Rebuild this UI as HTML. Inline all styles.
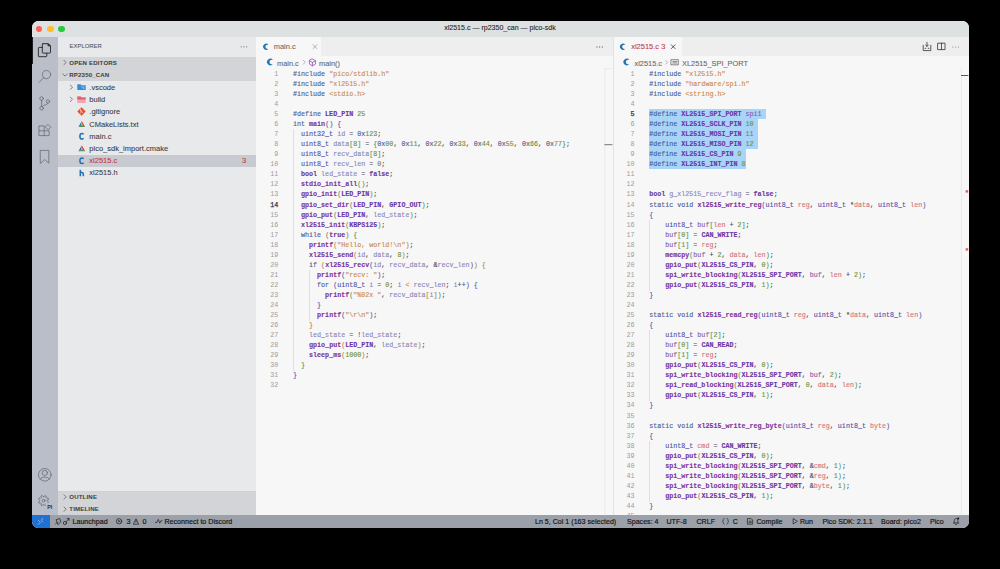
<!DOCTYPE html>
<html><head><meta charset="utf-8">
<style>
*{margin:0;padding:0;box-sizing:border-box}
html,body{width:1000px;height:569px;background:#000;overflow:hidden}
body{font-family:"Liberation Sans",sans-serif;position:relative}
#win{position:absolute;left:31.5px;top:21px;width:937px;height:506.5px;border-radius:6.5px;overflow:hidden;background:#f7f7f7}
.abs{position:absolute}
#title{left:0;top:0;width:937px;height:16px;background:#dde1e1}
#title .t{position:absolute;left:0;width:100%;top:3.1px;text-align:center;font-size:7.05px;color:#262626;-webkit-text-stroke:0.1px currentColor}
.dot{position:absolute;top:4.6px;width:6.6px;height:6.6px;border-radius:50%}
#act{left:0;top:16px;width:26.5px;height:478px;background:#babec8}
#side{left:26.5px;top:16px;width:198px;height:478px;background:#e8e9eb}
#ed1{left:224.5px;top:16px;width:356.5px;height:478.5px;background:#f7f7f7}
#ed2{left:581px;top:16px;width:356px;height:478.5px;background:#f7f7f7;border-left:0.6px solid #e2e2e2}
#status{left:0;top:494px;width:937px;height:12.5px;background:#9ba0a9}
.tabbar{position:absolute;left:0;top:0;width:100%;height:19px;background:#eeeeee}
.tab{position:absolute;top:0;height:19px;background:#f7f7f7}
.ui{font-size:7.5px;color:#3c3c3c;white-space:pre;position:absolute;-webkit-text-stroke:0.08px currentColor}
.sh{font-size:6.1px;font-weight:bold;color:#3c3c3c;position:absolute;letter-spacing:0.15px}
.row{position:absolute;left:0;width:198px;height:12.2px}
.code{font-family:"Liberation Mono",monospace}
.ln{position:absolute;height:10px;line-height:10px;text-align:right;font-family:"Liberation Mono",monospace;font-size:6.7px;color:#9c9c9c}
.ln.cur{color:#2e3550;-webkit-text-stroke:0.25px currentColor}
.cl{position:absolute;height:10px;line-height:10px;white-space:pre;font-family:"Liberation Mono",monospace;font-size:6.7px;color:#444;-webkit-text-stroke:0.12px currentColor}
.cl i{font-style:normal}
.sel{position:absolute;height:10.04px;background:#a7d4f7}
.ig{position:absolute;width:0.7px;height:10.6px;background:#e0e0e0}
.k{color:#4b5a92}
.kb{color:#6b3a9a;font-weight:bold}
.t{color:#5250ac}
.s{color:#cd8a45}
.n{color:#6f8f3e}
.f{color:#7a35a0;font-weight:bold}
.m{color:#6c36a6;font-weight:bold}
.p{color:#d4737a}
.v{color:#8a86b8}
.v2{color:#8a5aa8}
.o{color:#484d5e}
.b0{color:#5856ae}
.b1{color:#4f985c}
.b2{color:#b08a3a}
.st{position:absolute;top:2.8px;font-size:7.1px;color:#111;white-space:pre;-webkit-text-stroke:0.15px currentColor}
svg{position:absolute;overflow:visible}
</style></head><body>
<div id="win">
  <div id="title" class="abs">
    <div class="dot" style="left:4.2px;background:#fe5f57"></div>
    <div class="dot" style="left:15.6px;background:#febc2e"></div>
    <div class="dot" style="left:26.6px;background:#28c840"></div>
    <div class="t">xl2515.c — rp2350_can — pico-sdk</div>
  </div>
  <div id="act" class="abs">
    <div class="abs" style="left:0;top:0;width:1.3px;height:26.7px;background:#1f1f1f"></div>
  </div>
  <div id="side" class="abs">
    <div class="ui" style="left:11.6px;top:6.4px;font-size:5.9px;color:#555">EXPLORER</div>
        <div class="row" style="top:19.5px;background:#d2d4d7"></div>
    <div class="row" style="top:31.7px;background:#d2d4d7"></div>
    <div class="sh" style="left:11.3px;top:21.7px">OPEN EDITORS</div>
    <div class="sh" style="left:11.3px;top:33.9px">RP2350_CAN</div>
    <div class="row" style="top:117.6px;background:#c7cad0"></div>
    <div class="ui" style="left:31.3px;top:46.0px">.vscode</div>
    <div class="ui" style="left:31.3px;top:58.2px">build</div>
    <div class="ui" style="left:31.3px;top:70.4px">.gitignore</div>
    <div class="ui" style="left:31.3px;top:82.6px">CMakeLists.txt</div>
    <div class="ui" style="left:31.3px;top:94.8px">main.c</div>
    <div class="ui" style="left:31.3px;top:107.0px">pico_sdk_import.cmake</div>
    <div class="ui" style="left:31.3px;top:119.2px;color:#c23a3a">xl2515.c</div>
    <div class="ui" style="left:184px;top:119.2px;color:#c23a3a">3</div>
    <div class="ui" style="left:31.3px;top:131.4px">xl2515.h</div>
    <div class="row" style="top:453.7px;height:12.3px;background:#d2d4d7;border-top:0.5px solid #cfd1d4"></div>
    <div class="row" style="top:466px;height:12.5px;background:#d2d4d7"></div>
    <div class="sh" style="left:11.3px;top:455.7px">OUTLINE</div>
    <div class="sh" style="left:11.3px;top:468.0px">TIMELINE</div>
  </div>
  <div id="ed1" class="abs">
    <div class="tabbar"></div>
    <div class="tab" style="left:0;width:65px"></div>
    <div class="ui" style="left:17.7px;top:4.6px;color:#6a6a6a">main.c</div>
    <div class="ui" style="left:21px;top:21.5px;font-size:7.4px;color:#666">main.c</div>
    <div class="ui" style="left:63px;top:21.5px;font-size:7.4px;color:#666">main()</div>
      </div>
  <div id="ed2" class="abs">
    <div class="tabbar"></div>
    <div class="tab" style="left:0;width:68.5px"></div>
    <div class="ui" style="left:17.7px;top:4.6px;color:#c23a3a">xl2515.c 3</div>
    <div class="ui" style="left:21px;top:21.5px;font-size:7.4px;color:#666">xl2515.c</div>
    <div class="ui" style="left:68.5px;top:21.5px;font-size:7.4px;color:#666">XL2515_SPI_PORT</div>
  </div>
  <div id="status" class="abs">
    <div class="abs" style="left:0;top:0;width:18.7px;height:12.5px;background:#2171d2"></div>
    <div class="st" style="left:41px">Launchpad</div>
    <div class="st" style="left:95px">3</div>
    <div class="st" style="left:111px">0</div>
    <div class="st" style="left:133px">Reconnect to Discord</div>
    <div class="st" style="left:503.5px">Ln 5, Col 1 (163 selected)</div>
    <div class="st" style="left:595.5px">Spaces: 4</div>
    <div class="st" style="left:635px">UTF-8</div>
    <div class="st" style="left:665px">CRLF</div>
    <div class="st" style="left:701.3px">C</div>
    <div class="st" style="left:725px">Compile</div>
    <div class="st" style="left:768.5px">Run</div>
    <div class="st" style="left:791px">Pico SDK: 2.1.1</div>
    <div class="st" style="left:849.5px">Board: pico2</div>
    <div class="st" style="left:898.5px">Pico</div>
  </div>
</div>
<div id="codeL" class="abs" style="left:0;top:0;width:1000px;height:515.3px;overflow:hidden">
<div class="ig" style="top:129.19px;left:293.00px"></div>
<div class="ig" style="top:139.24px;left:293.00px"></div>
<div class="ig" style="top:149.28px;left:293.00px"></div>
<div class="ig" style="top:159.33px;left:293.00px"></div>
<div class="ig" style="top:169.38px;left:293.00px"></div>
<div class="ig" style="top:179.43px;left:293.00px"></div>
<div class="ig" style="top:189.48px;left:293.00px"></div>
<div class="ig" style="top:199.52px;left:293.00px"></div>
<div class="ig" style="top:209.57px;left:293.00px"></div>
<div class="ig" style="top:219.62px;left:293.00px"></div>
<div class="ig" style="top:229.67px;left:293.00px"></div>
<div class="ig" style="top:239.72px;left:293.00px"></div>
<div class="ig" style="top:249.76px;left:293.00px"></div>
<div class="ig" style="top:259.81px;left:293.00px"></div>
<div class="ig" style="top:269.86px;left:293.00px"></div>
<div class="ig" style="top:269.86px;left:309.12px"></div>
<div class="ig" style="top:279.91px;left:293.00px"></div>
<div class="ig" style="top:279.91px;left:309.12px"></div>
<div class="ig" style="top:289.96px;left:293.00px"></div>
<div class="ig" style="top:289.96px;left:309.12px"></div>
<div class="ig" style="top:300.00px;left:293.00px"></div>
<div class="ig" style="top:300.00px;left:309.12px"></div>
<div class="ig" style="top:310.05px;left:293.00px"></div>
<div class="ig" style="top:310.05px;left:309.12px"></div>
<div class="ig" style="top:320.10px;left:293.00px"></div>
<div class="ig" style="top:330.15px;left:293.00px"></div>
<div class="ig" style="top:340.20px;left:293.00px"></div>
<div class="ig" style="top:350.24px;left:293.00px"></div>
<div class="ig" style="top:360.29px;left:293.00px"></div>
<div class="ln" style="top:68.90px;left:248.2px;width:30.0px">1</div>
<div class="cl" style="top:68.90px;left:293.0px"><i class="k">#include</i> <i class="s">&quot;pico/stdlib.h&quot;</i></div>
<div class="ln" style="top:78.95px;left:248.2px;width:30.0px">2</div>
<div class="cl" style="top:78.95px;left:293.0px"><i class="k">#include</i> <i class="s">&quot;xl2515.h&quot;</i></div>
<div class="ln" style="top:89.00px;left:248.2px;width:30.0px">3</div>
<div class="cl" style="top:89.00px;left:293.0px"><i class="k">#include</i> <i class="s">&lt;stdio.h&gt;</i></div>
<div class="ln" style="top:99.04px;left:248.2px;width:30.0px">4</div>
<div class="ln" style="top:109.09px;left:248.2px;width:30.0px">5</div>
<div class="cl" style="top:109.09px;left:293.0px"><i class="k">#define</i> <i class="m">LED_PIN</i> <i class="n">25</i></div>
<div class="ln" style="top:119.14px;left:248.2px;width:30.0px">6</div>
<div class="cl" style="top:119.14px;left:293.0px"><i class="k">int</i> <i class="f">main</i><i class="b0">(</i><i class="b0">)</i> <i class="b0">{</i></div>
<div class="ln" style="top:129.19px;left:248.2px;width:30.0px">7</div>
<div class="cl" style="top:129.19px;left:293.0px">  <i class="t">uint32_t</i> <i class="v">id</i> <i class="o">=</i> <i class="k">0x</i><i class="n">123</i><i class="o">;</i></div>
<div class="ln" style="top:139.24px;left:248.2px;width:30.0px">8</div>
<div class="cl" style="top:139.24px;left:293.0px">  <i class="t">uint8_t</i> <i class="v">data</i><i class="b1">[</i><i class="n">8</i><i class="b1">]</i> <i class="o">=</i> <i class="b1">{</i><i class="k">0x</i><i class="n">00</i><i class="o">,</i> <i class="k">0x</i><i class="n">11</i><i class="o">,</i> <i class="k">0x</i><i class="n">22</i><i class="o">,</i> <i class="k">0x</i><i class="n">33</i><i class="o">,</i> <i class="k">0x</i><i class="n">44</i><i class="o">,</i> <i class="k">0x</i><i class="n">55</i><i class="o">,</i> <i class="k">0x</i><i class="n">66</i><i class="o">,</i> <i class="k">0x</i><i class="n">77</i><i class="b1">}</i><i class="o">;</i></div>
<div class="ln" style="top:149.28px;left:248.2px;width:30.0px">9</div>
<div class="cl" style="top:149.28px;left:293.0px">  <i class="t">uint8_t</i> <i class="v">recv_data</i><i class="b1">[</i><i class="n">8</i><i class="b1">]</i><i class="o">;</i></div>
<div class="ln" style="top:159.33px;left:248.2px;width:30.0px">10</div>
<div class="cl" style="top:159.33px;left:293.0px">  <i class="t">uint8_t</i> <i class="v">recv_len</i> <i class="o">=</i> <i class="n">0</i><i class="o">;</i></div>
<div class="ln" style="top:169.38px;left:248.2px;width:30.0px">11</div>
<div class="cl" style="top:169.38px;left:293.0px">  <i class="kb">bool</i> <i class="v">led_state</i> <i class="o">=</i> <i class="kb">false</i><i class="o">;</i></div>
<div class="ln" style="top:179.43px;left:248.2px;width:30.0px">12</div>
<div class="cl" style="top:179.43px;left:293.0px">  <i class="f">stdio_init_all</i><i class="b1">(</i><i class="b1">)</i><i class="o">;</i></div>
<div class="ln" style="top:189.48px;left:248.2px;width:30.0px">13</div>
<div class="cl" style="top:189.48px;left:293.0px">  <i class="f">gpio_init</i><i class="b1">(</i><i class="m">LED_PIN</i><i class="b1">)</i><i class="o">;</i></div>
<div class="ln cur" style="top:199.52px;left:248.2px;width:30.0px">14</div>
<div class="cl" style="top:199.52px;left:293.0px">  <i class="f">gpio_set_dir</i><i class="b1">(</i><i class="m">LED_PIN</i><i class="o">,</i> <i class="m">GPIO_OUT</i><i class="b1">)</i><i class="o">;</i></div>
<div class="ln" style="top:209.57px;left:248.2px;width:30.0px">15</div>
<div class="cl" style="top:209.57px;left:293.0px">  <i class="f">gpio_put</i><i class="b1">(</i><i class="m">LED_PIN</i><i class="o">,</i> <i class="v">led_state</i><i class="b1">)</i><i class="o">;</i></div>
<div class="ln" style="top:219.62px;left:248.2px;width:30.0px">16</div>
<div class="cl" style="top:219.62px;left:293.0px">  <i class="f">xl2515_init</i><i class="b1">(</i><i class="m">KBPS125</i><i class="b1">)</i><i class="o">;</i></div>
<div class="ln" style="top:229.67px;left:248.2px;width:30.0px">17</div>
<div class="cl" style="top:229.67px;left:293.0px">  <i class="k">while</i> <i class="b1">(</i><i class="kb">true</i><i class="b1">)</i> <i class="b1">{</i></div>
<div class="ln" style="top:239.72px;left:248.2px;width:30.0px">18</div>
<div class="cl" style="top:239.72px;left:293.0px">    <i class="f">printf</i><i class="b2">(</i><i class="s">&quot;Hello, world!\n&quot;</i><i class="b2">)</i><i class="o">;</i></div>
<div class="ln" style="top:249.76px;left:248.2px;width:30.0px">19</div>
<div class="cl" style="top:249.76px;left:293.0px">    <i class="f">xl2515_send</i><i class="b2">(</i><i class="v">id</i><i class="o">,</i> <i class="v">data</i><i class="o">,</i> <i class="n">8</i><i class="b2">)</i><i class="o">;</i></div>
<div class="ln" style="top:259.81px;left:248.2px;width:30.0px">20</div>
<div class="cl" style="top:259.81px;left:293.0px">    <i class="k">if</i> <i class="b2">(</i><i class="f">xl2515_recv</i><i class="b0">(</i><i class="v">id</i><i class="o">,</i> <i class="v">recv_data</i><i class="o">,</i> <i class="o">&amp;</i><i class="v">recv_len</i><i class="b0">)</i><i class="b2">)</i> <i class="b2">{</i></div>
<div class="ln" style="top:269.86px;left:248.2px;width:30.0px">21</div>
<div class="cl" style="top:269.86px;left:293.0px">      <i class="f">printf</i><i class="b0">(</i><i class="s">&quot;recv: &quot;</i><i class="b0">)</i><i class="o">;</i></div>
<div class="ln" style="top:279.91px;left:248.2px;width:30.0px">22</div>
<div class="cl" style="top:279.91px;left:293.0px">      <i class="k">for</i> <i class="b0">(</i><i class="t">uint8_t</i> <i class="v">i</i> <i class="o">=</i> <i class="n">0</i><i class="o">;</i> <i class="v">i</i> <i class="s">&lt;</i> <i class="v">recv_len</i><i class="o">;</i> <i class="v">i</i><i class="o">+</i><i class="o">+</i><i class="b0">)</i> <i class="b0">{</i></div>
<div class="ln" style="top:289.96px;left:248.2px;width:30.0px">23</div>
<div class="cl" style="top:289.96px;left:293.0px">        <i class="f">printf</i><i class="b1">(</i><i class="s">&quot;%02x &quot;</i><i class="o">,</i> <i class="v">recv_data</i><i class="b2">[</i><i class="v">i</i><i class="b2">]</i><i class="b1">)</i><i class="o">;</i></div>
<div class="ln" style="top:300.00px;left:248.2px;width:30.0px">24</div>
<div class="cl" style="top:300.00px;left:293.0px">      <i class="b0">}</i></div>
<div class="ln" style="top:310.05px;left:248.2px;width:30.0px">25</div>
<div class="cl" style="top:310.05px;left:293.0px">      <i class="f">printf</i><i class="b0">(</i><i class="s">&quot;\r\n&quot;</i><i class="b0">)</i><i class="o">;</i></div>
<div class="ln" style="top:320.10px;left:248.2px;width:30.0px">26</div>
<div class="cl" style="top:320.10px;left:293.0px">    <i class="b2">}</i></div>
<div class="ln" style="top:330.15px;left:248.2px;width:30.0px">27</div>
<div class="cl" style="top:330.15px;left:293.0px">    <i class="v">led_state</i> <i class="o">=</i> <i class="o">!</i><i class="v">led_state</i><i class="o">;</i></div>
<div class="ln" style="top:340.20px;left:248.2px;width:30.0px">28</div>
<div class="cl" style="top:340.20px;left:293.0px">    <i class="f">gpio_put</i><i class="b2">(</i><i class="m">LED_PIN</i><i class="o">,</i> <i class="v">led_state</i><i class="b2">)</i><i class="o">;</i></div>
<div class="ln" style="top:350.24px;left:248.2px;width:30.0px">29</div>
<div class="cl" style="top:350.24px;left:293.0px">    <i class="f">sleep_ms</i><i class="b2">(</i><i class="n">1000</i><i class="b2">)</i><i class="o">;</i></div>
<div class="ln" style="top:360.29px;left:248.2px;width:30.0px">30</div>
<div class="cl" style="top:360.29px;left:293.0px">  <i class="b1">}</i></div>
<div class="ln" style="top:370.34px;left:248.2px;width:30.0px">31</div>
<div class="cl" style="top:370.34px;left:293.0px"><i class="b0">}</i></div>
<div class="ln" style="top:380.39px;left:248.2px;width:30.0px">32</div>
</div>
<div id="codeR" class="abs" style="left:0;top:0;width:1000px;height:515.3px;overflow:hidden">
<div class="sel" style="top:109.09px;left:649.20px;width:116.87px"></div>
<div class="sel" style="top:119.14px;left:649.20px;width:108.81px"></div>
<div class="sel" style="top:129.19px;left:649.20px;width:108.81px"></div>
<div class="sel" style="top:139.24px;left:649.20px;width:108.81px"></div>
<div class="sel" style="top:149.28px;left:649.20px;width:96.72px"></div>
<div class="sel" style="top:159.33px;left:649.20px;width:96.72px"></div>
<div class="ig" style="top:219.62px;left:649.20px"></div>
<div class="ig" style="top:229.67px;left:649.20px"></div>
<div class="ig" style="top:239.72px;left:649.20px"></div>
<div class="ig" style="top:249.76px;left:649.20px"></div>
<div class="ig" style="top:259.81px;left:649.20px"></div>
<div class="ig" style="top:269.86px;left:649.20px"></div>
<div class="ig" style="top:279.91px;left:649.20px"></div>
<div class="ig" style="top:330.15px;left:649.20px"></div>
<div class="ig" style="top:340.20px;left:649.20px"></div>
<div class="ig" style="top:350.24px;left:649.20px"></div>
<div class="ig" style="top:360.29px;left:649.20px"></div>
<div class="ig" style="top:370.34px;left:649.20px"></div>
<div class="ig" style="top:380.39px;left:649.20px"></div>
<div class="ig" style="top:390.44px;left:649.20px"></div>
<div class="ig" style="top:440.68px;left:649.20px"></div>
<div class="ig" style="top:450.72px;left:649.20px"></div>
<div class="ig" style="top:460.77px;left:649.20px"></div>
<div class="ig" style="top:470.82px;left:649.20px"></div>
<div class="ig" style="top:480.87px;left:649.20px"></div>
<div class="ig" style="top:490.92px;left:649.20px"></div>
<div class="ln" style="top:68.90px;left:604.6px;width:30.0px">1</div>
<div class="cl" style="top:68.90px;left:649.2px"><i class="k">#include</i> <i class="s">&quot;xl2515.h&quot;</i></div>
<div class="ln" style="top:78.95px;left:604.6px;width:30.0px">2</div>
<div class="cl" style="top:78.95px;left:649.2px"><i class="k">#include</i> <i class="s">&quot;hardware/spi.h&quot;</i></div>
<div class="ln" style="top:89.00px;left:604.6px;width:30.0px">3</div>
<div class="cl" style="top:89.00px;left:649.2px"><i class="k">#include</i> <i class="s">&lt;string.h&gt;</i></div>
<div class="ln" style="top:99.04px;left:604.6px;width:30.0px">4</div>
<div class="ln cur" style="top:109.09px;left:604.6px;width:30.0px">5</div>
<div class="cl" style="top:109.09px;left:649.2px"><i class="k">#define</i> <i class="m">XL2515_SPI_PORT</i> <i class="v2">spi1</i></div>
<div class="ln" style="top:119.14px;left:604.6px;width:30.0px">6</div>
<div class="cl" style="top:119.14px;left:649.2px"><i class="k">#define</i> <i class="m">XL2515_SCLK_PIN</i> <i class="n">10</i></div>
<div class="ln" style="top:129.19px;left:604.6px;width:30.0px">7</div>
<div class="cl" style="top:129.19px;left:649.2px"><i class="k">#define</i> <i class="m">XL2515_MOSI_PIN</i> <i class="n">11</i></div>
<div class="ln" style="top:139.24px;left:604.6px;width:30.0px">8</div>
<div class="cl" style="top:139.24px;left:649.2px"><i class="k">#define</i> <i class="m">XL2515_MISO_PIN</i> <i class="n">12</i></div>
<div class="ln" style="top:149.28px;left:604.6px;width:30.0px">9</div>
<div class="cl" style="top:149.28px;left:649.2px"><i class="k">#define</i> <i class="m">XL2515_CS_PIN</i> <i class="n">9</i></div>
<div class="ln" style="top:159.33px;left:604.6px;width:30.0px">10</div>
<div class="cl" style="top:159.33px;left:649.2px"><i class="k">#define</i> <i class="m">XL2515_INT_PIN</i> <i class="n">8</i></div>
<div class="ln" style="top:169.38px;left:604.6px;width:30.0px">11</div>
<div class="ln" style="top:179.43px;left:604.6px;width:30.0px">12</div>
<div class="ln" style="top:189.48px;left:604.6px;width:30.0px">13</div>
<div class="cl" style="top:189.48px;left:649.2px"><i class="kb">bool</i> <i class="v">g_xl2515_recv_flag</i> <i class="o">=</i> <i class="kb">false</i><i class="o">;</i></div>
<div class="ln" style="top:199.52px;left:604.6px;width:30.0px">14</div>
<div class="cl" style="top:199.52px;left:649.2px"><i class="k">static</i> <i class="k">void</i> <i class="f">xl2515_write_reg</i><i class="b0">(</i><i class="t">uint8_t</i> <i class="p">reg</i><i class="o">,</i> <i class="t">uint8_t</i> <i class="o">*</i><i class="p">data</i><i class="o">,</i> <i class="t">uint8_t</i> <i class="p">len</i><i class="b0">)</i></div>
<div class="ln" style="top:209.57px;left:604.6px;width:30.0px">15</div>
<div class="cl" style="top:209.57px;left:649.2px"><i class="b0">{</i></div>
<div class="ln" style="top:219.62px;left:604.6px;width:30.0px">16</div>
<div class="cl" style="top:219.62px;left:649.2px">    <i class="t">uint8_t</i> <i class="v2">buf</i><i class="b1">[</i><i class="p">len</i> <i class="o">+</i> <i class="n">2</i><i class="b1">]</i><i class="o">;</i></div>
<div class="ln" style="top:229.67px;left:604.6px;width:30.0px">17</div>
<div class="cl" style="top:229.67px;left:649.2px">    <i class="v2">buf</i><i class="b1">[</i><i class="n">0</i><i class="b1">]</i> <i class="o">=</i> <i class="m">CAN_WRITE</i><i class="o">;</i></div>
<div class="ln" style="top:239.72px;left:604.6px;width:30.0px">18</div>
<div class="cl" style="top:239.72px;left:649.2px">    <i class="v2">buf</i><i class="b1">[</i><i class="n">1</i><i class="b1">]</i> <i class="o">=</i> <i class="p">reg</i><i class="o">;</i></div>
<div class="ln" style="top:249.76px;left:604.6px;width:30.0px">19</div>
<div class="cl" style="top:249.76px;left:649.2px">    <i class="f">memcpy</i><i class="b1">(</i><i class="v2">buf</i> <i class="o">+</i> <i class="n">2</i><i class="o">,</i> <i class="p">data</i><i class="o">,</i> <i class="p">len</i><i class="b1">)</i><i class="o">;</i></div>
<div class="ln" style="top:259.81px;left:604.6px;width:30.0px">20</div>
<div class="cl" style="top:259.81px;left:649.2px">    <i class="f">gpio_put</i><i class="b1">(</i><i class="m">XL2515_CS_PIN</i><i class="o">,</i> <i class="n">0</i><i class="b1">)</i><i class="o">;</i></div>
<div class="ln" style="top:269.86px;left:604.6px;width:30.0px">21</div>
<div class="cl" style="top:269.86px;left:649.2px">    <i class="f">spi_write_blocking</i><i class="b1">(</i><i class="m">XL2515_SPI_PORT</i><i class="o">,</i> <i class="v2">buf</i><i class="o">,</i> <i class="p">len</i> <i class="o">+</i> <i class="n">2</i><i class="b1">)</i><i class="o">;</i></div>
<div class="ln" style="top:279.91px;left:604.6px;width:30.0px">22</div>
<div class="cl" style="top:279.91px;left:649.2px">    <i class="f">gpio_put</i><i class="b1">(</i><i class="m">XL2515_CS_PIN</i><i class="o">,</i> <i class="n">1</i><i class="b1">)</i><i class="o">;</i></div>
<div class="ln" style="top:289.96px;left:604.6px;width:30.0px">23</div>
<div class="cl" style="top:289.96px;left:649.2px"><i class="b0">}</i></div>
<div class="ln" style="top:300.00px;left:604.6px;width:30.0px">24</div>
<div class="ln" style="top:310.05px;left:604.6px;width:30.0px">25</div>
<div class="cl" style="top:310.05px;left:649.2px"><i class="k">static</i> <i class="k">void</i> <i class="f">xl2515_read_reg</i><i class="b0">(</i><i class="t">uint8_t</i> <i class="p">reg</i><i class="o">,</i> <i class="t">uint8_t</i> <i class="o">*</i><i class="p">data</i><i class="o">,</i> <i class="t">uint8_t</i> <i class="p">len</i><i class="b0">)</i></div>
<div class="ln" style="top:320.10px;left:604.6px;width:30.0px">26</div>
<div class="cl" style="top:320.10px;left:649.2px"><i class="b0">{</i></div>
<div class="ln" style="top:330.15px;left:604.6px;width:30.0px">27</div>
<div class="cl" style="top:330.15px;left:649.2px">    <i class="t">uint8_t</i> <i class="v2">buf</i><i class="b1">[</i><i class="n">2</i><i class="b1">]</i><i class="o">;</i></div>
<div class="ln" style="top:340.20px;left:604.6px;width:30.0px">28</div>
<div class="cl" style="top:340.20px;left:649.2px">    <i class="v2">buf</i><i class="b1">[</i><i class="n">0</i><i class="b1">]</i> <i class="o">=</i> <i class="m">CAN_READ</i><i class="o">;</i></div>
<div class="ln" style="top:350.24px;left:604.6px;width:30.0px">29</div>
<div class="cl" style="top:350.24px;left:649.2px">    <i class="v2">buf</i><i class="b1">[</i><i class="n">1</i><i class="b1">]</i> <i class="o">=</i> <i class="p">reg</i><i class="o">;</i></div>
<div class="ln" style="top:360.29px;left:604.6px;width:30.0px">30</div>
<div class="cl" style="top:360.29px;left:649.2px">    <i class="f">gpio_put</i><i class="b1">(</i><i class="m">XL2515_CS_PIN</i><i class="o">,</i> <i class="n">0</i><i class="b1">)</i><i class="o">;</i></div>
<div class="ln" style="top:370.34px;left:604.6px;width:30.0px">31</div>
<div class="cl" style="top:370.34px;left:649.2px">    <i class="f">spi_write_blocking</i><i class="b1">(</i><i class="m">XL2515_SPI_PORT</i><i class="o">,</i> <i class="v2">buf</i><i class="o">,</i> <i class="n">2</i><i class="b1">)</i><i class="o">;</i></div>
<div class="ln" style="top:380.39px;left:604.6px;width:30.0px">32</div>
<div class="cl" style="top:380.39px;left:649.2px">    <i class="f">spi_read_blocking</i><i class="b1">(</i><i class="m">XL2515_SPI_PORT</i><i class="o">,</i> <i class="n">0</i><i class="o">,</i> <i class="p">data</i><i class="o">,</i> <i class="p">len</i><i class="b1">)</i><i class="o">;</i></div>
<div class="ln" style="top:390.44px;left:604.6px;width:30.0px">33</div>
<div class="cl" style="top:390.44px;left:649.2px">    <i class="f">gpio_put</i><i class="b1">(</i><i class="m">XL2515_CS_PIN</i><i class="o">,</i> <i class="n">1</i><i class="b1">)</i><i class="o">;</i></div>
<div class="ln" style="top:400.48px;left:604.6px;width:30.0px">34</div>
<div class="cl" style="top:400.48px;left:649.2px"><i class="b0">}</i></div>
<div class="ln" style="top:410.53px;left:604.6px;width:30.0px">35</div>
<div class="ln" style="top:420.58px;left:604.6px;width:30.0px">36</div>
<div class="cl" style="top:420.58px;left:649.2px"><i class="k">static</i> <i class="k">void</i> <i class="f">xl2515_write_reg_byte</i><i class="b0">(</i><i class="t">uint8_t</i> <i class="p">reg</i><i class="o">,</i> <i class="t">uint8_t</i> <i class="p">byte</i><i class="b0">)</i></div>
<div class="ln" style="top:430.63px;left:604.6px;width:30.0px">37</div>
<div class="cl" style="top:430.63px;left:649.2px"><i class="b0">{</i></div>
<div class="ln" style="top:440.68px;left:604.6px;width:30.0px">38</div>
<div class="cl" style="top:440.68px;left:649.2px">    <i class="t">uint8_t</i> <i class="p">cmd</i> <i class="o">=</i> <i class="m">CAN_WRITE</i><i class="o">;</i></div>
<div class="ln" style="top:450.72px;left:604.6px;width:30.0px">39</div>
<div class="cl" style="top:450.72px;left:649.2px">    <i class="f">gpio_put</i><i class="b1">(</i><i class="m">XL2515_CS_PIN</i><i class="o">,</i> <i class="n">0</i><i class="b1">)</i><i class="o">;</i></div>
<div class="ln" style="top:460.77px;left:604.6px;width:30.0px">40</div>
<div class="cl" style="top:460.77px;left:649.2px">    <i class="f">spi_write_blocking</i><i class="b1">(</i><i class="m">XL2515_SPI_PORT</i><i class="o">,</i> <i class="o">&amp;</i><i class="p">cmd</i><i class="o">,</i> <i class="n">1</i><i class="b1">)</i><i class="o">;</i></div>
<div class="ln" style="top:470.82px;left:604.6px;width:30.0px">41</div>
<div class="cl" style="top:470.82px;left:649.2px">    <i class="f">spi_write_blocking</i><i class="b1">(</i><i class="m">XL2515_SPI_PORT</i><i class="o">,</i> <i class="o">&amp;</i><i class="p">reg</i><i class="o">,</i> <i class="n">1</i><i class="b1">)</i><i class="o">;</i></div>
<div class="ln" style="top:480.87px;left:604.6px;width:30.0px">42</div>
<div class="cl" style="top:480.87px;left:649.2px">    <i class="f">spi_write_blocking</i><i class="b1">(</i><i class="m">XL2515_SPI_PORT</i><i class="o">,</i> <i class="o">&amp;</i><i class="p">byte</i><i class="o">,</i> <i class="n">1</i><i class="b1">)</i><i class="o">;</i></div>
<div class="ln" style="top:490.92px;left:604.6px;width:30.0px">43</div>
<div class="cl" style="top:490.92px;left:649.2px">    <i class="f">gpio_put</i><i class="b1">(</i><i class="m">XL2515_CS_PIN</i><i class="o">,</i> <i class="n">1</i><i class="b1">)</i><i class="o">;</i></div>
<div class="ln" style="top:500.96px;left:604.6px;width:30.0px">44</div>
<div class="cl" style="top:500.96px;left:649.2px"><i class="b0">}</i></div>
<div class="ln" style="top:511.01px;left:604.6px;width:30.0px">45</div>
</div>
<svg width="1000" height="569" viewBox="0 0 1000 569" style="position:absolute;left:0;top:0" fill="none" stroke-linecap="round" stroke-linejoin="round">
<!-- activity bar -->
<g stroke="#2b2b2b" stroke-width="0.95">
  <path d="M46.8,53.4 V56 a0.7,0.7 0 0 1 -0.7,0.7 H39.1 a0.7,0.7 0 0 1 -0.7,-0.7 V48.1 a0.7,0.7 0 0 1 0.7,-0.7 H42.3"/>
  <path d="M43,43.7 H48.2 L50.5,46 V52.4 a0.7,0.7 0 0 1 -0.7,0.7 H43 a0.7,0.7 0 0 1 -0.7,-0.7 V44.4 a0.7,0.7 0 0 1 0.7,-0.7 Z"/>
  <path d="M48.4,43.9 L50.3,45.8 L48.4,45.8 Z" fill="#2b2b2b"/>
</g>
<g stroke="#65686e" stroke-width="0.75">
  <circle cx="46.6" cy="74.6" r="4.1"/>
  <path d="M43.7,77.6 L39.1,82.4"/>
  <circle cx="41.6" cy="98.6" r="1.8"/>
  <circle cx="48" cy="101.4" r="1.7"/>
  <circle cx="41.6" cy="108.3" r="1.8"/>
  <path d="M41.6,100.4 V106.5 M48,103.1 C48,105.4 42.6,104.4 42.2,106.6"/>
  <path d="M39.3,125.9 H44.2 V135.6 H39.3 Z M39.3,130.8 H49.1 V135.6 H44.2"/>
  <path d="M48.2,124.6 L50.8,127.2 L48.2,129.8 L45.6,127.2 Z"/>
  <path d="M40.6,150.4 H48.8 V163.2 L44.7,159.6 L40.6,163.2 Z"/>
  <circle cx="44.8" cy="474.8" r="6.3"/>
  <circle cx="44.8" cy="472.9" r="2.6"/>
  <path d="M40.2,479.2 C41.5,476.3 48.1,476.3 49.4,479.2"/>
  <path d="M47.47,501.11 L48.63,501.90 L48.08,503.24 L46.69,502.97 L45.97,503.69 L46.24,505.08 L44.90,505.63 L44.11,504.47 L43.09,504.47 L42.30,505.63 L40.96,505.08 L41.23,503.69 L40.51,502.97 L39.12,503.24 L38.57,501.90 L39.73,501.11 L39.73,500.09 L38.57,499.30 L39.12,497.96 L40.51,498.23 L41.23,497.51 L40.96,496.12 L42.30,495.57 L43.09,496.73 L44.11,496.73 L44.90,495.57 L46.24,496.12 L45.97,497.51 L46.69,498.23 L48.08,497.96 L48.63,499.30 L47.47,500.09 Z"/>
  <circle cx="43.6" cy="500.6" r="1.4"/>
</g>
<rect x="45.6" y="502.6" width="8" height="7" fill="#babec8"/>
<text x="47.2" y="508.9" font-family="Liberation Sans" font-weight="bold" font-size="5.4" fill="#333">PI</text>
<!-- sidebar -->
<g stroke="#555" stroke-width="0.7">
  <path d="M63.9,60.3 L66.1,62.5 L63.9,64.7"/>
  <path d="M62.8,73.8 L65.1,76.1 L67.4,73.8"/>
  <path d="M70.3,85 L72.5,87.2 L70.3,89.4"/>
  <path d="M70.3,97.1 L72.5,99.3 L70.3,101.5"/>
</g>
<path d="M77.3,84.3 H80.6 L81.5,85.2 H85.7 V89.9 H77.3 Z" fill="#3a8ad8"/>
<path d="M81.2,86.4 L83.8,88.6 M83.8,86.2 V88.8" stroke="#a9d0f5" stroke-width="0.6"/>
<path d="M77.3,96.5 H80.6 L81.5,97.4 H85.7 V102.9 H77.3 Z" fill="#f0a7b3"/>
<path d="M77.3,96.5 H80.6 L81.5,97.4 H85.7 V99.6 H77.3 Z" fill="#df5f6f"/>
<path d="M81.5,107.3 L85.7,111.5 L81.5,115.7 L77.3,111.5 Z" fill="#e0502b"/>
<path d="M80.3,109.2 L82.6,112.6 M80.8,110.1 V113.2" stroke="#fff" stroke-width="0.55"/>
<path d="M81.8,121 L78.4,126.9 L81.3,125.6 Z" fill="#2769c0"/>
<path d="M81.8,121 L85.2,126.9 L82.4,125.6 Z" fill="#d8403a"/>
<path d="M78.4,126.9 L81.3,125.6 L82.4,125.6 L85.2,126.9 Z" fill="#3a9a3a"/>
<path d="M81.8,145.3 L78.4,151.2 L81.3,149.9 Z" fill="#2769c0"/>
<path d="M81.8,145.3 L85.2,151.2 L82.4,149.9 Z" fill="#d8403a"/>
<path d="M78.4,151.2 L81.3,149.9 L82.4,149.9 L85.2,151.2 Z" fill="#3a9a3a"/>
<g stroke="#2372ba" stroke-width="1.55" stroke-linecap="butt">
  <path d="M83.6,134.3 C83.1,133.7 82.5,133.5 81.9,133.5 C80.6,133.5 79.9,134.8 79.9,136.3 C79.9,137.8 80.6,139.1 81.9,139.1 C82.5,139.1 83.1,138.9 83.6,138.3"/>
  <path d="M83.6,158.7 C83.1,158.1 82.5,157.9 81.9,157.9 C80.6,157.9 79.9,159.2 79.9,160.7 C79.9,162.2 80.6,163.5 81.9,163.5 C82.5,163.5 83.1,163.3 83.6,162.7"/>
  <path d="M80.3,169.8 V176.3 M80.3,173.3 C80.7,172.2 83.3,171.8 83.3,173.9 V176.3"/>
</g>
<g fill="#777"><circle cx="241.2" cy="46.8" r="0.65"/><circle cx="243.9" cy="46.8" r="0.65"/><circle cx="246.6" cy="46.8" r="0.65"/></g>
<path d="M64,494.7 L66.2,496.9 L64,499.1 M64,507 L66.2,509.2 L64,511.4" stroke="#555" stroke-width="0.7"/>
<!-- tabs -->
<g fill="#2176b5">
  <path d="M268.50,44.87 A3.00,3.00 0 1 0 268.50,48.73 A2.15,2.15 0 1 1 268.50,44.87 Z"/>
  <path d="M625.30,44.87 A3.00,3.00 0 1 0 625.30,48.73 A2.15,2.15 0 1 1 625.30,44.87 Z"/>
  <path d="M272.98,59.94 A3.30,3.30 0 1 0 272.98,64.06 A2.35,2.35 0 1 1 272.98,59.94 Z"/>
  <path d="M629.38,59.94 A3.30,3.30 0 1 0 629.38,64.06 A2.35,2.35 0 1 1 629.38,59.94 Z"/>
</g>
<path d="M312.9,44.7 L316.9,48.7 M316.9,44.7 L312.9,48.7" stroke="#8d8d8d" stroke-width="0.65"/>
<path d="M671.3,44.8 L675.1,48.6 M675.1,44.8 L671.3,48.6" stroke="#333" stroke-width="0.8"/>
<path d="M303.3,60.4 L305.2,62.3 L303.3,64.2 M665.7,60.4 L667.6,62.3 L665.7,64.2" stroke="#888" stroke-width="0.6"/>
<g stroke="#8b46b4" stroke-width="0.75">
  <path d="M312.4,59 L315.4,60.7 V64.1 L312.4,65.8 L309.4,64.1 V60.7 Z"/>
  <path d="M309.4,60.7 L312.4,62.4 L315.4,60.7 M312.4,62.4 V65.8"/>
</g>
<g stroke="#555" stroke-width="0.7">
  <rect x="671.3" y="59.7" width="7" height="5.1"/>
  <path d="M672.8,61.6 H676.8 M672.8,63 H676.8"/>
</g>
<g fill="#777"><circle cx="596.9" cy="47" r="0.65"/><circle cx="599.6" cy="47" r="0.65"/><circle cx="602.3" cy="47" r="0.65"/></g>
<g fill="#888"><circle cx="952.8" cy="47" r="0.6"/><circle cx="955.6" cy="47" r="0.6"/><circle cx="958.4" cy="47" r="0.6"/></g>
<g stroke="#333" stroke-width="0.8">
  <path d="M923.2,45.3 V50.6 H930.8 V45.3"/>
  <path d="M927,42.3 V46.3 M925.6,45 L927,46.4 L928.4,45"/>
  <path d="M925,48.3 H925.8 M928.2,48.3 H929"/>
  <rect x="938" y="43.2" width="7" height="6.4"/>
  <path d="M941.5,43.2 V49.6"/>
</g>
<!-- scroll / overview -->
<path d="M604.8,68.6 V515 M604.8,68.6 H612" stroke="#e2e2e2" stroke-width="0.6"/>
<path d="M961.4,68.6 V515" stroke="#e2e2e2" stroke-width="0.6"/>
<path d="M961.4,75.5 H968" stroke="#444" stroke-width="0.9"/>
<path d="M604.8,144.7 H612" stroke="#666" stroke-width="0.9"/>
<rect x="965.6" y="190.2" width="2.6" height="2.4" fill="#e26060"/>
<rect x="965.6" y="248.2" width="2.6" height="2.4" fill="#e26060"/>
<!-- status bar -->
<g stroke="#8cc4ff" stroke-width="0.8">
  <path d="M38.2,520.2 L40.4,522.3 L38.2,524.5"/>
  <path d="M42.7,518.3 L41.3,520.4 L42.7,521.9"/>
</g>
<g stroke="#1e1e1e" stroke-width="0.7">
  <path d="M55.5,524 L57.5,522 M56.5,519.6 L59.8,518.6 L60.8,521.9 L58.2,524.3 Z"/>
  <circle cx="64.9" cy="523" r="1.6"/><path d="M66,521.8 L69,518.6 M67.2,518.6 H69 V520.4"/>
  <circle cx="119.1" cy="521.3" r="2.7"/>
  <path d="M118,520.2 L120.2,522.4 M120.2,520.2 L118,522.4"/>
  <path d="M133.5,523.9 L136,518.8 L138.5,523.9 Z M136,520.6 V522.2"/>
  <path d="M155.4,522.4 L157,522.4 L158.3,519.3 L159.8,523.2 L160.8,520.8 L162,520.8"/>
  <path d="M747.8,518.6 H751.2 L752.6,520 V524.2 H747.8 Z M749,521.2 H751.4 M749,522.6 H751.4"/>
  <path d="M793.5,518.8 L797.4,521.3 L793.5,523.8 Z"/>
  <path d="M724.2,518.4 C723.2,518.4 723.3,519.2 723.3,520.2 C723.3,520.9 723,521.3 722.5,521.3 C723,521.3 723.3,521.7 723.3,522.4 C723.3,523.4 723.2,524.2 724.2,524.2" stroke-width="0.6"/>
  <path d="M727,518.4 C728,518.4 727.9,519.2 727.9,520.2 C727.9,520.9 728.2,521.3 728.7,521.3 C728.2,521.3 727.9,521.7 727.9,522.4 C727.9,523.4 728,524.2 727,524.2" stroke-width="0.6"/>
  <path d="M953.4,523 H958.8 M954.3,523 V520.5 C954.3,517.9 957.9,517.9 957.9,520.5 V523 M955.5,524.4 H956.7"/>
  <circle cx="958.2" cy="518.4" r="1" fill="#111" stroke="none"/>
</g>
</svg>

</body></html>
